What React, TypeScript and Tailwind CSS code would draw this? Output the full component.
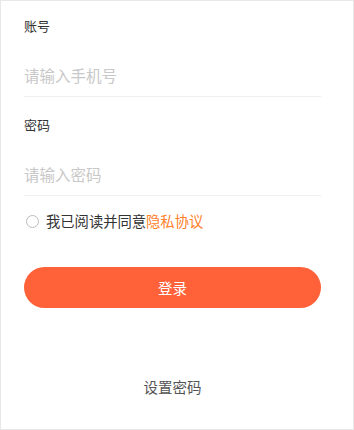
export default function App() {
  return (
    <div
      className="w-[354px] h-[430px] bg-white border border-[#e8e8e8] flex flex-col pl-[23px] pr-[32px]"
      style={{ fontFamily: '"Noto Sans CJK SC", "Noto Sans", sans-serif' }}
    >
      <div className="pt-[15px]">
        <div className="text-[13px] leading-[20px] text-[#333]">账号</div>
        <div className="h-[61px] flex items-center border-b border-[#f0f0f0] pt-[19px]">
          <input
            className="w-full outline-none text-[15.5px] text-[#333] placeholder:text-[#c8c8c8] bg-transparent"
            placeholder="请输入手机号"
          />
        </div>
        <div className="text-[13px] leading-[20px] text-[#333] mt-[18px]">密码</div>
        <div className="h-[61px] flex items-center border-b border-[#f0f0f0] pt-[19px]">
          <input
            type="password"
            className="w-full outline-none text-[15.5px] text-[#333] placeholder:text-[#c8c8c8] bg-transparent"
            placeholder="请输入密码"
          />
        </div>
        <div className="flex items-center mt-[14px] h-[22px]">
          <span className="w-[13px] h-[13px] rounded-full border border-[#bbb] ml-[2px] mr-[7px]" />
          <span className="text-[14.3px] text-[#333]">
            我已阅读并同意<span className="text-[#ff7f2a]">隐私协议</span>
          </span>
        </div>
        <button className="mt-[35px] w-full h-[41px] rounded-full bg-[#ff6139] text-white text-[14.5px]">
          登录
        </button>
      </div>
      <div className="mt-auto mb-[31px] text-center text-[14.5px] text-[#555]">设置密码</div>
    </div>
  );
}
